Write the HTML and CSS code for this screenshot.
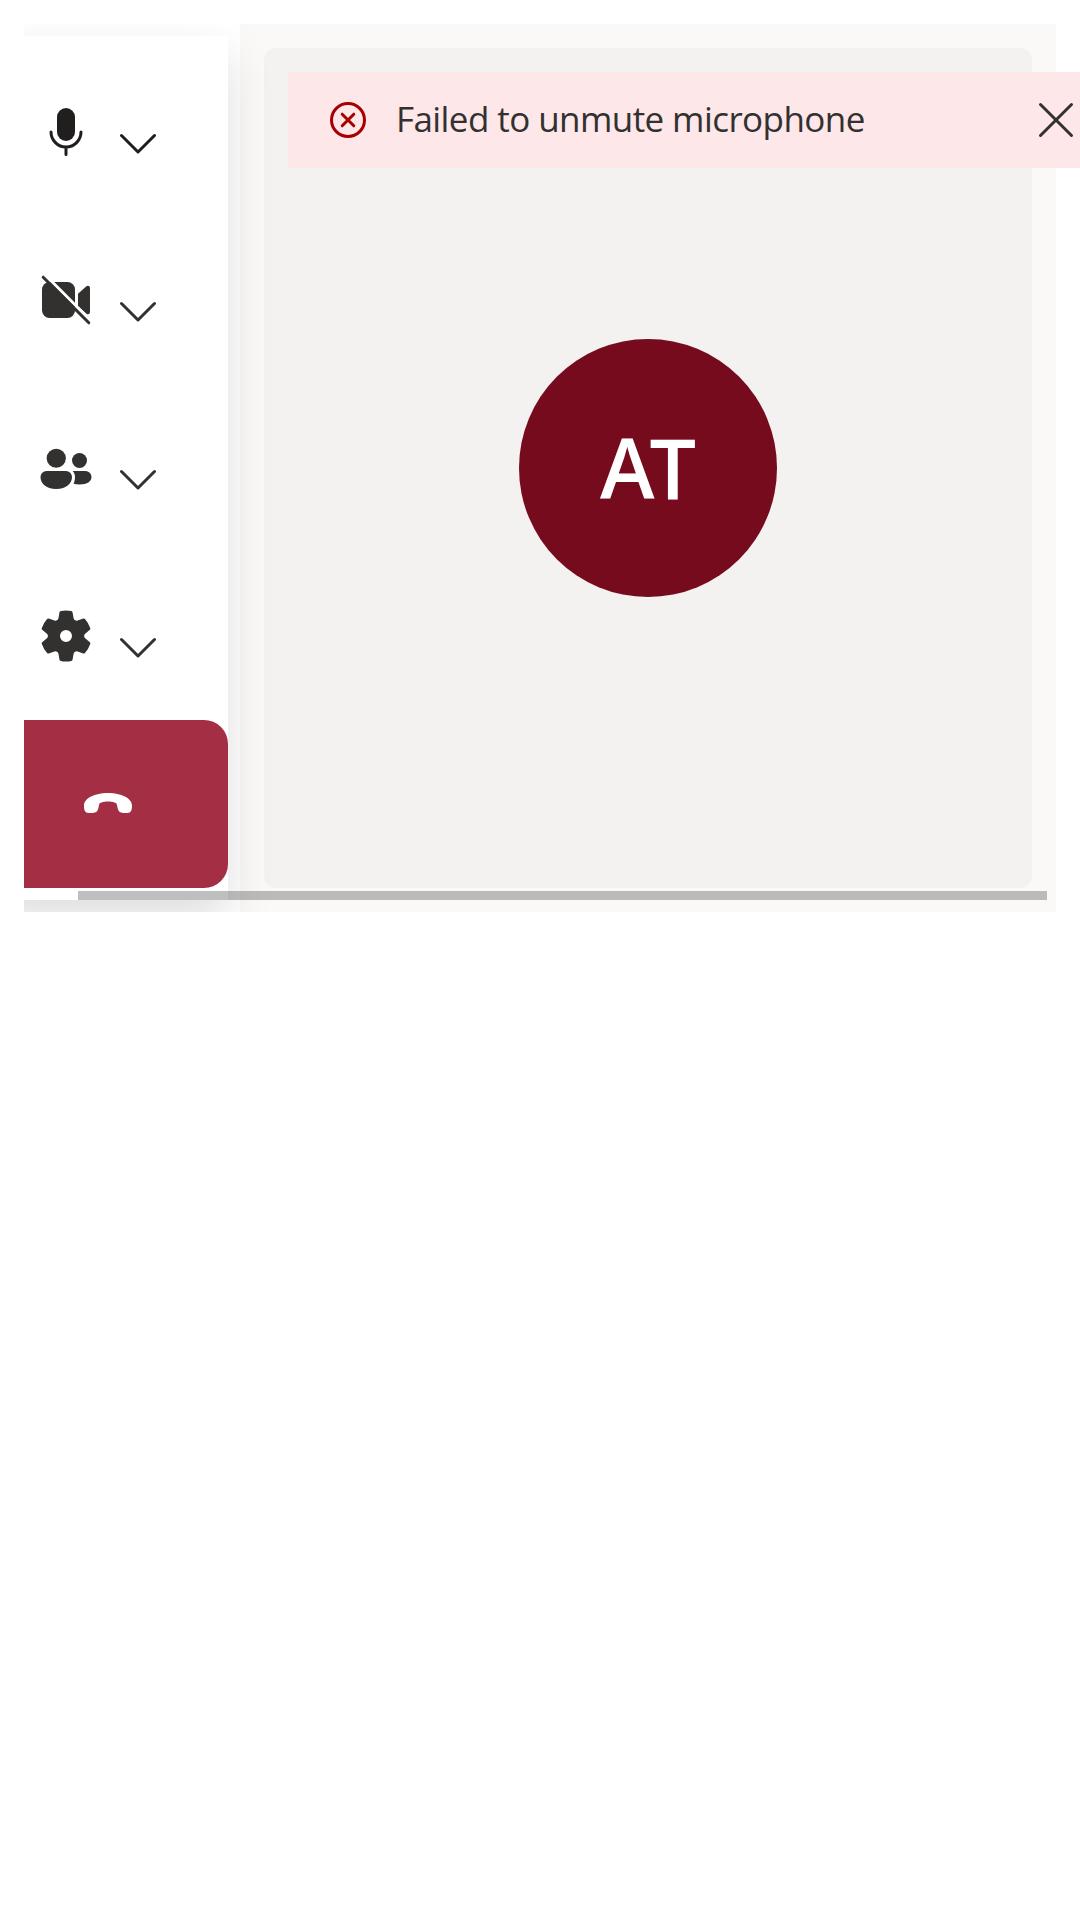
FILE: index.html
```html
<!DOCTYPE html>
<html lang="en">
<head>
<meta charset="utf-8">
<title>Call</title>
<link rel="stylesheet" href="styles.css">
</head>
<body>
<main class="app">
  <div class="call">
    <nav class="controls">
      <button class="control control-mic" aria-label="Microphone">
        <svg class="icon" viewBox="0 0 20 20"><rect x="7" y="2" width="6" height="11" rx="3"/><path class="line" d="M5 10a5 5 0 0 0 10 0M10 15v2.5"/></svg>
        <svg class="chevron" viewBox="0 0 36 36"><path d="M1.5 9.5 18 26 34.5 9.5"/></svg>
      </button>
      <button class="control" aria-label="Camera">
        <svg class="icon" viewBox="0 0 20 20"><rect x="2" y="4" width="11" height="12" rx="2.5"/><path d="M14 7.9 16.8 5.45a.7.7 0 0 1 1.2.55v8a.7.7 0 0 1-1.2.55L14 12.1Z"/><path class="gap" d="M3 1.6 18.4 17"/><path class="line" d="M2.4 2.4 17.6 17.6"/></svg>
        <svg class="chevron" viewBox="0 0 36 36"><path d="M1.5 9.5 18 26 34.5 9.5"/></svg>
      </button>
      <button class="control" aria-label="People">
        <svg class="icon" viewBox="0 0 20 20"><circle cx="6.75" cy="6.75" r="3.2"/><circle cx="14.5" cy="7.5" r="2.5"/><path d="M1.5 13a2 2 0 0 1 2-2H10a2 2 0 0 1 2 2c0 2-1.75 4-5.25 4S1.5 15 1.5 13Z"/><path d="M12.2 11h4.3a2 2 0 0 1 2 2c0 1.5-1.4 2.5-4 2.5-.75 0-1.4-.08-2-.24.35-.7.5-1.5.5-2.26 0-.75-.25-1.45-.8-2Z"/></svg>
        <svg class="chevron" viewBox="0 0 36 36"><path d="M1.5 9.5 18 26 34.5 9.5"/></svg>
      </button>
      <button class="control" aria-label="Settings">
        <svg class="icon" viewBox="0 0 20 20"><path d="M1.91 7.38A8.5 8.5 0 0 1 3.7 4.3a.5.5 0 0 1 .54-.13l1.92.68a1 1 0 0 0 1.32-.76l.36-2a.5.5 0 0 1 .4-.4 8.53 8.53 0 0 1 3.55 0c.2.04.35.2.38.4l.37 2a1 1 0 0 0 1.32.76l1.92-.68a.5.5 0 0 1 .54.13 8.5 8.5 0 0 1 1.78 3.08c.06.2 0 .4-.15.54l-1.56 1.32a1 1 0 0 0 0 1.52l1.56 1.32a.5.5 0 0 1 .15.54 8.5 8.5 0 0 1-1.78 3.08.5.5 0 0 1-.54.13l-1.92-.68a1 1 0 0 0-1.32.76l-.37 2a.5.5 0 0 1-.38.4 8.53 8.53 0 0 1-3.56 0 .5.5 0 0 1-.39-.4l-.36-2a1 1 0 0 0-1.32-.76l-1.92.68a.5.5 0 0 1-.54-.13 8.5 8.5 0 0 1-1.78-3.08.5.5 0 0 1 .15-.54l1.56-1.32a1 1 0 0 0 0-1.52L2.06 7.92a.5.5 0 0 1-.15-.54ZM8 10a2 2 0 1 0 4 0 2 2 0 0 0-4 0Z"/></svg>
        <svg class="chevron" viewBox="0 0 36 36"><path d="M1.5 9.5 18 26 34.5 9.5"/></svg>
      </button>
      <button class="hang-up" aria-label="Leave">
        <svg class="phone" viewBox="0 0 48 20"><path d="M0 12.5C0 5 11 0 24 0s24 5 24 12.5c0 4.700-1 7.500-4.500 7.500h-2.500c-4.500 0-6.400-1.200-7.200-4.200l-1-4.200c-.3-1.200-.8-1.500-1.800-1.800C28.500 8.700 26 8.600 24 8.600s-4.500.1-7 1.200c-1 .3-1.500.6-1.800 1.800l-1 4.200c-.8 3-2.700 4.200-7.200 4.200H4.500C1 20 0 17.200 0 12.500Z"/></svg>
      </button>
    </nav>
    <section class="stage">
      <div class="tile"><div class="avatar">AT</div></div>
    </section>
    <div class="scrollbar"></div>
  </div>
  <div class="alert" role="alert">
    <svg class="alert-icon" viewBox="0 0 36 36"><circle cx="18" cy="18" r="16.500"/><path d="M12.200 12.200 23.800 23.800M23.800 12.200 12.200 23.800"/></svg>
    <span class="alert-text">Failed to unmute microphone</span>
    <svg class="close" viewBox="0 0 36 36"><path d="M2.500 2.500 33.500 33.500M33.500 2.500 2.500 33.500"/></svg>
  </div>
</main>
</body>
</html>
```
FILE: styles.css
```css
* { box-sizing: border-box; }

body {
  margin: 0;
  background: #fff;
  color: #323130;
  font-family: "Open Sans", "Noto Sans", sans-serif;
  overflow: hidden;
}

button {
  margin: 0;
  padding: 0;
  border: 0;
  background: none;
  font: inherit;
}

svg { display: block; flex: none; }

.app {
  position: relative;
  padding: 24px;
}

.call {
  position: relative;
  display: flex;
  height: 888px;
  overflow: hidden;
}

.controls {
  position: relative;
  z-index: 1;
  display: flex;
  flex-direction: column;
  flex: none;
  width: 240px;
  margin: 12px 12px 12px -36px;
  padding: 12px 0;
  background: #fff;
  box-shadow: 0 19.2px 43.2px 0 rgba(0, 0, 0, .132);
}

.control {
  display: flex;
  align-items: center;
  gap: 24px;
  height: 168px;
  padding-left: 48px;
  color: #323130;
}

.control-mic { color: #201f1e; }

.icon {
  width: 60px;
  height: 60px;
  fill: currentColor;
}

.icon .line {
  fill: none;
  stroke: currentColor;
  stroke-linecap: round;
}

.icon .gap {
  fill: none;
  stroke: #fff;
}

.chevron {
  width: 36px;
  height: 36px;
  margin-top: 23px;
  fill: none;
  stroke: currentColor;
  stroke-width: 3;
  stroke-linecap: round;
  stroke-linejoin: round;
}

.hang-up {
  display: flex;
  align-items: center;
  justify-content: center;
  height: 168px;
  border-radius: 24px;
  background: #a42e43;
}

.phone {
  width: 48px;
  height: 20px;
  margin-bottom: 2px;
  fill: #fff;
}

.stage {
  display: flex;
  flex: 1;
  padding: 24px;
  background: #faf9f8;
}

.tile {
  display: flex;
  flex: 1;
  align-items: center;
  justify-content: center;
  border-radius: 12px;
  background: #f3f2f1;
}

.avatar {
  display: flex;
  align-items: center;
  justify-content: center;
  width: 258px;
  height: 258px;
  padding: 0 5px 3px 0;
  border-radius: 50%;
  background: #750b1c;
  color: #fff;
  font-size: 82.5px;
  font-weight: 600;
  letter-spacing: -5px;
}

.scrollbar {
  position: absolute;
  z-index: 2;
  left: 54px;
  right: 9px;
  bottom: 12px;
  height: 9px;
  background: rgba(0, 0, 0, .25);
}

.alert {
  position: absolute;
  z-index: 3;
  top: 72px;
  left: 288px;
  right: 0;
  display: flex;
  align-items: center;
  height: 96px;
  padding: 0 6px 0 42px;
  background: #fde7e9;
}

.alert-icon {
  width: 36px;
  height: 36px;
  fill: none;
  stroke: #a80000;
  stroke-width: 3;
  stroke-linecap: round;
}

.alert-text {
  margin: 0 0 3px 30px;
  font-size: 35px;
  letter-spacing: -.58px;
  white-space: nowrap;
}

.close {
  width: 36px;
  height: 36px;
  margin-left: auto;
  fill: none;
  stroke: currentColor;
  stroke-width: 3;
  stroke-linecap: round;
}
```
